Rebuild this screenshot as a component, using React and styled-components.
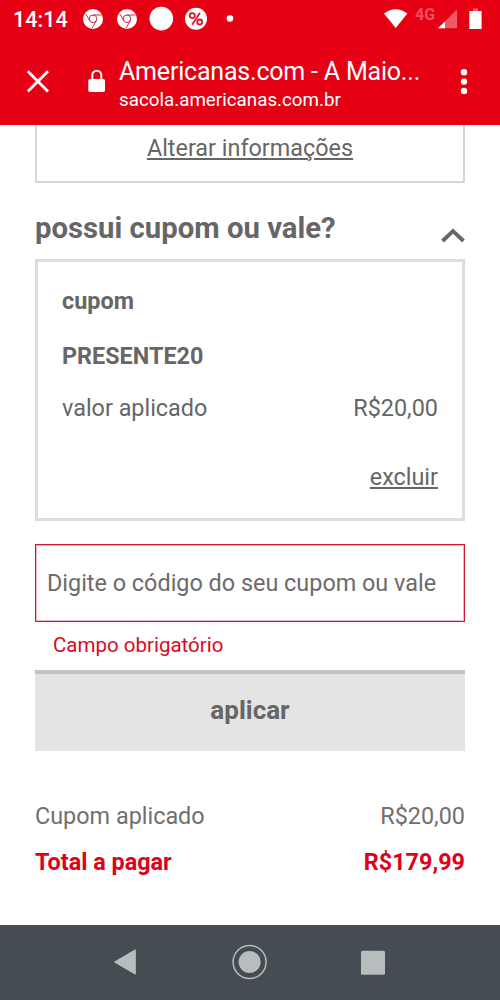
import React from 'react'

import styled, { createGlobalStyle } from 'styled-components'

const GlobalStyle = createGlobalStyle`
* {
  box-sizing: border-box;
}

body {
  margin: 0;
  background: #fff;
  color: #666;
  font-family: Roboto, "Liberation Sans", sans-serif;
  font-size: 23.4px;
}
`;

const Screen = styled.div`
width: 500px;
height: 1000px;
display: flex;
flex-direction: column;
overflow: hidden;
`;

const Header = styled.header`
height: 125px;
flex: none;
background: #e60014;
color: #fff;
`;

const StatusBar = styled.div`
height: 38px;
display: flex;
align-items: center;
justify-content: space-between;
padding: 0 18px 0 13px;
`;

const StatusGroup = styled.div`
display: flex;
align-items: center;

svg {
  display: block;
  overflow: visible;
}
`;

const Clock = styled.span`
width: 70px;
font-size: 21.6px;
font-weight: 500;
line-height: 38px;
padding-top: 2px;
`;

const Network = styled.span`
width: 23px;
font-size: 16px;
font-weight: 700;
line-height: 26px;
height: 34px;
color: #f2505e;
`;

const Toolbar = styled.div`
height: 87px;
display: flex;
align-items: center;
padding: 0 25px 0 27px;

svg {
  display: block;
  flex: none;
}
`;

const Site = styled.div`
width: 334px;
margin-left: 14px;
padding-top: 5px;
`;

const SiteTitle = styled.div`
font-size: 25px;
letter-spacing: -0.2px;
line-height: 31px;
white-space: nowrap;
`;

const SiteHost = styled.div`
font-size: 18.8px;
line-height: 26px;
white-space: nowrap;
`;

const Content = styled.main`
flex: 1;
display: flex;
flex-direction: column;
padding: 0 35px;
`;

const AddressCard = styled.section`
height: 58px;
border: solid #d6d6d6;
border-width: 0 2px 2px;
text-align: center;
line-height: 46px;
`;

const TextLink = styled.a`
color: inherit;
text-decoration: underline;
text-decoration-thickness: 2px;
text-underline-offset: 2px;
`;

const SectionHead = styled.div`
height: 76px;
display: flex;
justify-content: space-between;

svg {
  margin-top: 44px;
}
`;

const SectionTitle = styled.h2`
margin: 0;
font-size: 29.3px;
font-weight: 700;
line-height: 90px;
`;

const CouponCard = styled.section`
height: 262px;
border: 3px solid #dcdcdc;
padding: 15px 24px 0;
`;

const CouponLine = styled.div`
height: ${props => props.height};
line-height: 48px;
font-weight: ${props => (props.$bold ? 700 : 400)};
display: flex;
justify-content: ${props => (props.$end ? 'flex-end' : 'space-between')};
`;

const CouponInput = styled.input`
height: 78px;
margin-top: 23px;
border: 1px solid #d0182c;
border-radius: 0;
box-shadow: inset 0 0 0 1px rgba(214, 11, 34, 0.3);
padding: 0 11px;
background: #fff;
font: inherit;
color: #666;

&::placeholder {
  color: #6b6b6b;
  opacity: 1;
}
`;

const FieldError = styled.div`
height: 48px;
padding-left: 18px;
font-size: 20.5px;
line-height: 47px;
color: #d60b22;
`;

const ApplyButton = styled.button`
height: 81px;
border: 0;
border-top: 4px solid #c3c3c3;
padding: 0 0 5px;
background: #e4e4e4;
color: #666;
font-family: inherit;
font-size: 26px;
font-weight: 700;
`;

const Totals = styled.div`
margin-top: 42px;
`;

const TotalRow = styled.div`
height: 46px;
line-height: 46px;
display: flex;
justify-content: space-between;
font-weight: ${props => (props.$strong ? 700 : 400)};
color: ${props => (props.$strong ? '#e0001a' : '#707070')};
`;

const NavBar = styled.nav`
height: 75px;
flex: none;
display: flex;
align-items: center;
justify-content: space-between;
padding: 0 114px 1px 113px;
background: #454d53;
`;

const ChromeIcon = () => (
  <svg width="34" height="24" viewBox="0 0 34 24">
    <circle cx="10" cy="12" r="10" fill="#fff" />
    <g fill="none" stroke="#d8283c" strokeWidth="1">
      <circle cx="10" cy="11.8" r="3.8" />
      <path d="M10 8h8.6M6.7 13.7L2.8 7M13.3 13.7L9.2 21" />
    </g>
  </svg>
);

export default () => {
  return (
    <Screen>
      <GlobalStyle />
      <Header>
        <StatusBar>
          <StatusGroup>
            <Clock>14:14</Clock>
            <ChromeIcon />
            <ChromeIcon />
            <svg width="85" height="26" viewBox="0 0 85 26">
              <circle cx="10.3" cy="12.6" r="11.8" fill="#fff" />
              <circle cx="45" cy="12.8" r="11" fill="#fff" />
              <g fill="none" stroke="#d8182c" strokeWidth="1.8">
                <circle cx="41.3" cy="9.6" r="2.5" />
                <circle cx="48.7" cy="16" r="2.5" />
                <path d="M49 6.8L41 18.8" />
              </g>
              <circle cx="79" cy="12.5" r="3.3" fill="#fff" />
            </svg>
          </StatusGroup>
          <StatusGroup>
            <svg width="31" height="24" viewBox="0 0 31 24">
              <path d="M0 6.5Q11.7-2 23.4 6.5L11.7 21Z" fill="#fff" />
            </svg>
            <Network>4G</Network>
            <svg width="44" height="24" viewBox="0 0 44 24">
              <path d="M19 2.5V21.3H0Z" fill="#f05a68" />
              <path d="M7 14.4V21.3H0Z" fill="#fff" />
              <path d="M35 1.3h5V4h-5z" fill="#f05a68" />
              <path d="M31.3 4h12.3v18H31.3z" fill="#fff" />
            </svg>
          </StatusGroup>
        </StatusBar>
        <Toolbar>
          <svg width="78" height="28" viewBox="0 0 78 28">
            <path d="M.8 3.2L21 23.4M21 3.2L.8 23.4" stroke="#fff" strokeWidth="2.8" />
            <rect x="61.3" y="11" width="16.7" height="13" rx="1.8" fill="#fff" />
            <path d="M65.3 12V7.2a4.5 4.5 0 0 1 9 0V12" fill="none" stroke="#fff" strokeWidth="2" />
          </svg>
          <Site>
            <SiteTitle>Americanas.com - A Maio...</SiteTitle>
            <SiteHost>sacola.americanas.com.br</SiteHost>
          </Site>
          <svg width="22" height="28" viewBox="0 0 22 28" fill="#fff">
            <circle cx="11" cy="4.3" r="3.2" />
            <circle cx="11" cy="13.6" r="3.2" />
            <circle cx="11" cy="22.9" r="3.2" />
          </svg>
        </Toolbar>
      </Header>
      <Content>
        <AddressCard>
          <TextLink>Alterar informações</TextLink>
        </AddressCard>
        <SectionHead>
          <SectionTitle>possui cupom ou vale?</SectionTitle>
          <svg width="24" height="18" viewBox="0 0 24 18">
            <path d="M1.5 14L12 4L22.5 14" fill="none" stroke="#666" strokeWidth="3.8" />
          </svg>
        </SectionHead>
        <CouponCard>
          <CouponLine $bold height="55px">cupom</CouponLine>
          <CouponLine $bold height="52px">PRESENTE20</CouponLine>
          <CouponLine height="69px">
            <span>valor aplicado</span>
            <span>R$20,00</span>
          </CouponLine>
          <CouponLine $end height="48px">
            <TextLink>excluir</TextLink>
          </CouponLine>
        </CouponCard>
        <CouponInput placeholder="Digite o código do seu cupom ou vale" />
        <FieldError>Campo obrigatório</FieldError>
        <ApplyButton>aplicar</ApplyButton>
        <Totals>
          <TotalRow>
            <span>Cupom aplicado</span>
            <span>R$20,00</span>
          </TotalRow>
          <TotalRow $strong>
            <span>Total a pagar</span>
            <span>R$179,99</span>
          </TotalRow>
        </Totals>
      </Content>
      <NavBar>
        <svg width="24" height="28" viewBox="0 0 24 28">
          <path d="M22.3 1.8V26.2L1.5 14Z" fill="#b7bcbc" stroke="#b7bcbc" strokeLinejoin="round" />
        </svg>
        <svg width="36" height="36" viewBox="0 0 36 36">
          <circle cx="18.6" cy="18" r="16.5" fill="none" stroke="#b7bcbc" strokeWidth="1.5" />
          <circle cx="18.6" cy="18" r="11" fill="#b7bcbc" />
        </svg>
        <svg width="25" height="25" viewBox="0 0 25 25">
          <rect x="0" y=".8" width="24" height="24" rx="1.5" fill="#b7bcbc" />
        </svg>
      </NavBar>
    </Screen>
  );
}
